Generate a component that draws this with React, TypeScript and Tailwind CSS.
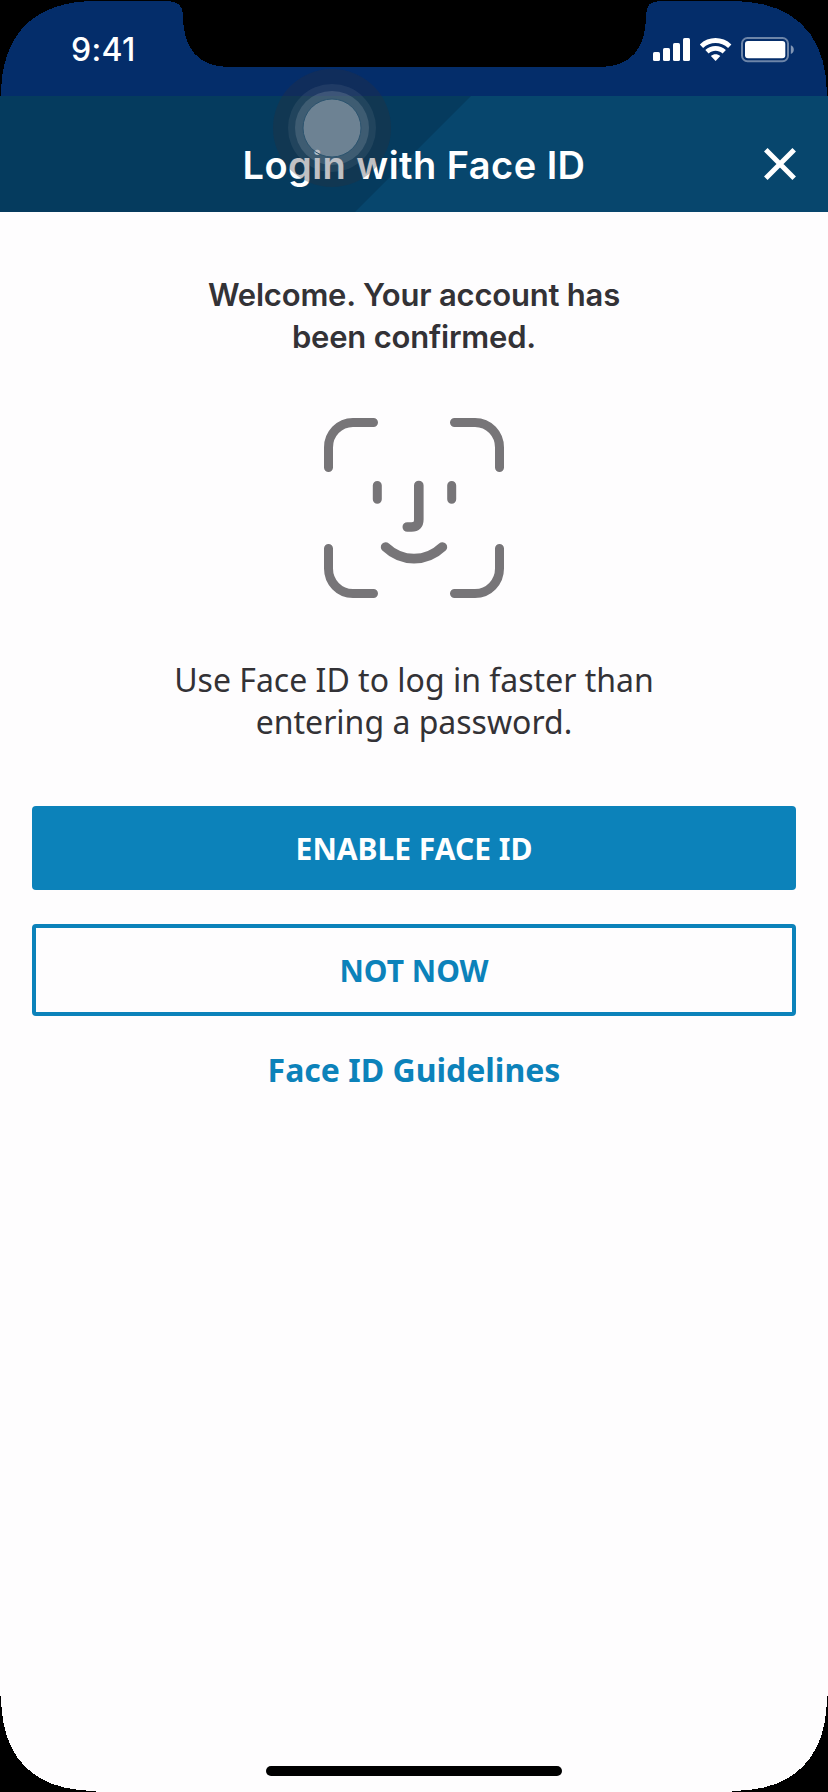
import React from "react";

function DeviceFrame() {
  return (
    <>
      <svg className="pointer-events-none absolute left-0 top-0" width="828" height="96" viewBox="0 0 828 96" shapeRendering="crispEdges">
        <path d="M0 0H96V1C34 1 1 34 1 96H0Z" />
        <path d="M828 0H732V1C794 1 827 34 827 96H828Z" />
        <path d="M96 0H732V1H662C650 1 646 5 646 16C646 47 632 67 600 67H229C197 67 183 47 183 16C183 5 178 1 166 1H96Z" />
      </svg>
      <svg className="pointer-events-none absolute bottom-0 left-0" width="828" height="96" viewBox="0 0 828 96" shapeRendering="crispEdges">
        <path d="M0 96H96V95C34 95 1 62 1 0H0Z" />
        <path d="M828 96H732V95C794 95 827 62 827 0H828Z" />
      </svg>
    </>
  );
}

function StatusIcons() {
  return (
    <svg width="144" height="28" viewBox="652 36 144 28" fill="#fff">
      <rect x="653" y="52" width="7" height="9" rx="1.6" />
      <rect x="663" y="48" width="7" height="13" rx="1.6" />
      <rect x="673" y="43" width="7" height="18" rx="1.6" />
      <rect x="683" y="38" width="7" height="23" rx="1.6" />
      <path d="M699.8 44.4C708.5 35.9 722.5 35.9 731.4 44.4L728.1 47.9C721 41.3 710 41.3 703.1 47.9Z" />
      <path d="M705.3 50C711 44.6 720 44.6 725.9 50L722.6 53.4C718.5 49.7 712.7 49.7 708.6 53.4Z" />
      <path d="M710.9 56.1C713.6 53.6 717.5 53.6 720.3 56.1L715.6 61.1Z" />
      <rect x="742" y="38" width="46" height="23.2" rx="5.5" fill="none" stroke="#fff" strokeOpacity="0.42" strokeWidth="2" />
      <rect x="745" y="41" width="40.3" height="17.2" rx="3" />
      <path d="M790.8 45.3C794.8 46.8 794.8 52.6 790.8 54.1Z" fillOpacity="0.5" />
    </svg>
  );
}

function FaceIcon() {
  return (
    <svg width="180" height="180" viewBox="324 418 180 180" fill="none" stroke="#777578" strokeWidth="9" strokeLinecap="round">
      <path d="M328.5 467.5V447.5C328.5 434 339 422.5 353 422.5H373.5" />
      <path d="M454.5 422.5H475C489 422.5 499.5 434 499.5 447.5V467.5" />
      <path d="M328.5 548.5V568.5C328.5 582 339 593.5 353 593.5H373.5" />
      <path d="M454.5 593.5H475C489 593.5 499.5 582 499.5 568.5V548.5" />
      <path d="M377.3 485.5V499.2M451.7 485.5V499.2" />
      <path d="M418.8 485.5V519.5Q418.8 527 411.5 527H407.3" strokeWidth="9.6" />
      <path d="M385.6 547C402 562.5 426 562.5 442.4 547" strokeWidth="9.6" />
    </svg>
  );
}

function TouchIndicator() {
  return (
    <svg className="pointer-events-none absolute left-[272px] top-[68px]" width="120" height="120" viewBox="-60 -60 120 120">
      <circle r="59" fill="#2d2d38" fillOpacity="0.3" />
      <circle r="44" fill="#b4bec8" fillOpacity="0.1" />
      <circle r="37" fill="#b4bec8" fillOpacity="0.2" />
      <circle r="29" fill="#b8bec8" fillOpacity="0.39" stroke="#2b536e" strokeWidth="1" />
    </svg>
  );
}

export default function App() {
  return (
    <div className="relative flex h-[1792px] w-[828px] flex-col overflow-hidden bg-[#fefdfe] font-['Noto_Sans',sans-serif] text-[#333236]">
      <div className="flex h-24 shrink-0 justify-between bg-[#042d6a] pl-[71px] pr-8">
        <span className="pt-[30px] font-['Inter',sans-serif] text-[32px] font-medium leading-10 tracking-[0.3px] text-white">9:41</span>
        <div className="pt-9">
          <StatusIcons />
        </div>
      </div>
      <header className="relative flex h-[116px] shrink-0 items-center justify-center bg-[#07466d]">
        <svg className="absolute left-0 top-0" width="471" height="116" viewBox="0 0 471 116">
          <path d="M0 0H471L355 116H0Z" fill="#053b5e" />
        </svg>
        <h1 className="relative whitespace-nowrap pt-[22px] font-['Inter',sans-serif] text-[38px] font-semibold leading-[48px] tracking-[0.45px] text-white">Login with Face ID</h1>
        <button aria-label="Close" className="absolute right-8 top-[52px]">
          <svg className="block" width="32" height="32" viewBox="0 0 32 32" stroke="#fff" strokeWidth="5">
            <path d="M1.8 1.8L30.2 30.2M30.2 1.8L1.8 30.2" />
          </svg>
        </button>
      </header>
      <main className="flex flex-col items-center px-8">
        <h2 className="mt-[62px] whitespace-nowrap text-center font-['Inter',sans-serif] text-[31px] font-semibold leading-[42px] tracking-[-0.2px]">
          Welcome. Your account has
          <br />
          been confirmed.
        </h2>
        <div className="mt-[60px]">
          <FaceIcon />
        </div>
        <p className="mt-[61px] whitespace-nowrap text-center text-[32px] leading-[42px]">
          Use Face ID to log in faster than
          <br />
          entering a password.
        </p>
        <button className="mt-[63px] h-[84px] w-full rounded-[4px] bg-[#0c82ba] text-[30px] font-bold text-white">ENABLE FACE ID</button>
        <button className="mt-[34px] h-[92px] w-full rounded-[4px] border-4 border-[#0c82ba] text-[30px] font-bold text-[#0c82ba]">NOT NOW</button>
        <a className="mt-[33px] text-[32px] font-bold leading-[42px] text-[#0c82ba]">Face ID Guidelines</a>
      </main>
      <div className="mx-auto mb-4 mt-auto h-[10px] w-[296px] shrink-0 rounded-full bg-black" />
      <TouchIndicator />
      <DeviceFrame />
    </div>
  );
}
